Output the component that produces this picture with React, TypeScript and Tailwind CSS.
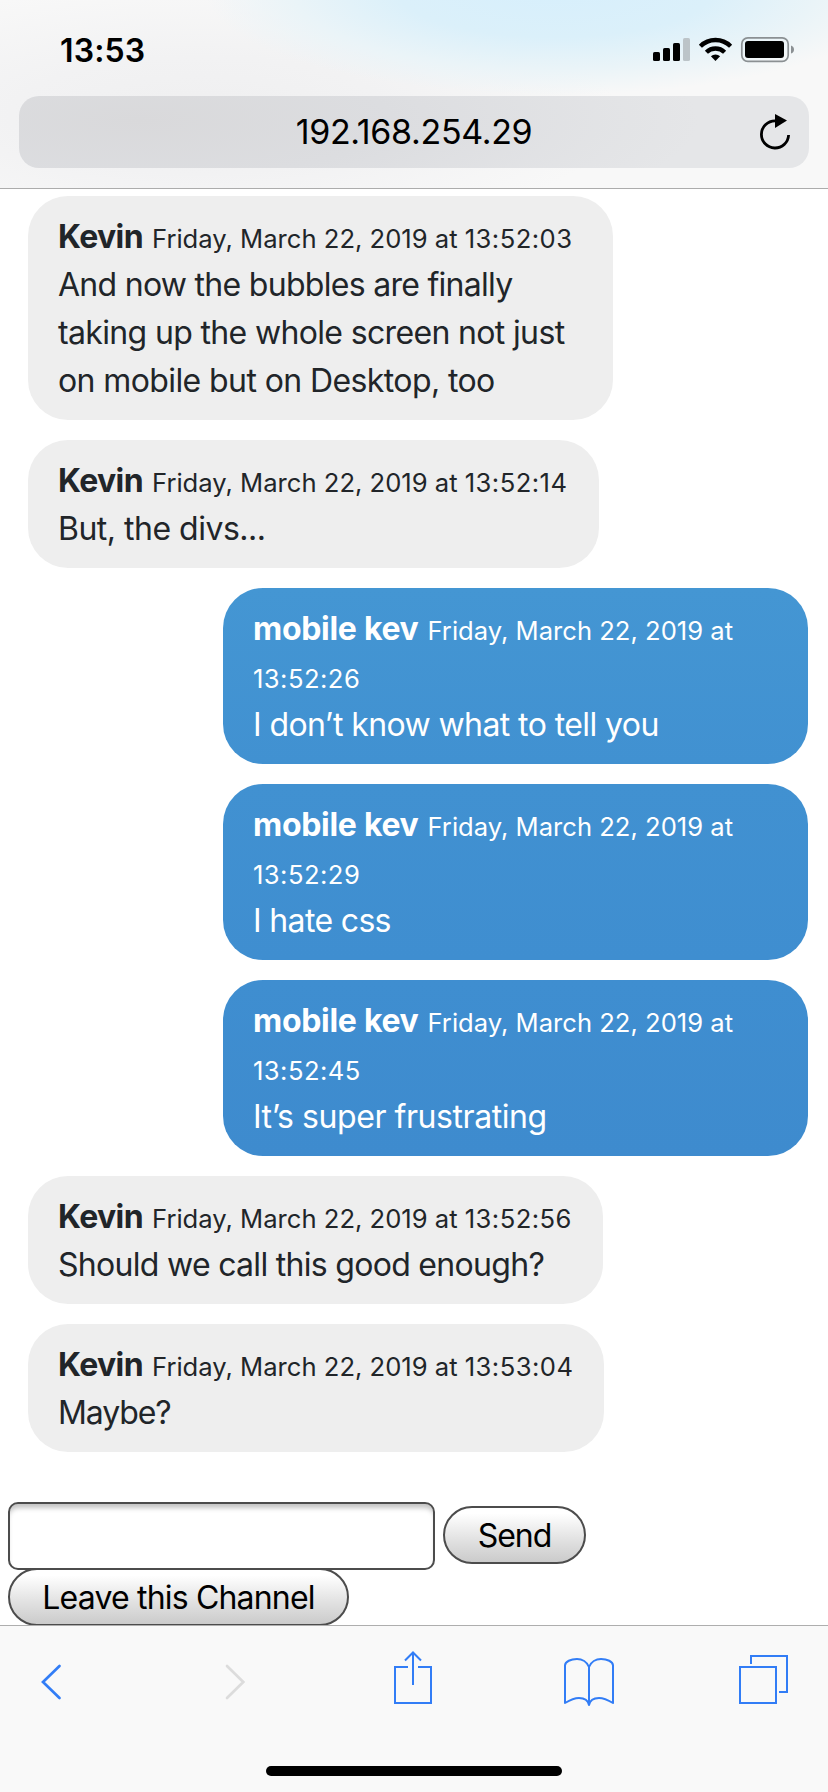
import React from "react";

type Line = { text: string; tracking: string };

type Message = {
  author: string;
  time: string;
  lines: Line[];
  mine?: boolean;
  box: string;
};

const messages: Message[] = [
  {
    author: "Kevin",
    time: "13:52:03",
    lines: [
      { text: "And now the bubbles are finally", tracking: "tracking-[-0.71px]" },
      { text: "taking up the whole screen not just", tracking: "tracking-[-0.65px]" },
      { text: "on mobile but on Desktop, too", tracking: "tracking-[-0.6px]" },
    ],
    box: "w-[585px]",
  },
  { author: "Kevin", time: "13:52:14", lines: [{ text: "But, the divs...", tracking: "tracking-[-0.5px]" }], box: "w-[571px]" },
  {
    author: "mobile kev",
    time: "13:52:26",
    lines: [{ text: "I don’t know what to tell you", tracking: "tracking-[-0.59px]" }],
    mine: true,
    box: "bg-linear-to-b from-[#4496d3] to-[#4191d1]",
  },
  {
    author: "mobile kev",
    time: "13:52:29",
    lines: [{ text: "I hate css", tracking: "tracking-[-0.65px]" }],
    mine: true,
    box: "bg-linear-to-b from-[#4191d1] to-[#3f8ed0]",
  },
  {
    author: "mobile kev",
    time: "13:52:45",
    lines: [{ text: "It’s super frustrating", tracking: "tracking-[-0.44px]" }],
    mine: true,
    box: "bg-linear-to-b from-[#3f8ed0] to-[#3e8bce]",
  },
  {
    author: "Kevin",
    time: "13:52:56",
    lines: [{ text: "Should we call this good enough?", tracking: "tracking-[-0.7px]" }],
    box: "w-[575px]",
  },
  { author: "Kevin", time: "13:53:04", lines: [{ text: "Maybe?", tracking: "tracking-[-1.1px]" }], box: "w-[576px]" },
];

function Bubble({ m }: { m: Message }) {
  const side = m.mine ? "self-end w-[585px] text-white" : "self-start bg-[#eeeeee] text-[#212529]";
  return (
    <article className={`${side} ${m.box} rounded-[40px] pt-[17px] pb-[15px] pl-[30px] whitespace-nowrap text-[32px] leading-[48px]`}>
      <div>
        <strong className={`font-bold ${m.mine ? "tracking-[-0.3px]" : "tracking-[-0.6px]"}`}>{m.author}</strong>{" "}
        <span className="text-[25.6px] leading-none">
          Friday, March 22, 2019 at{m.mine ? <br /> : " "}
          <span className="tracking-[0.45px]">{m.time}</span>
        </span>
      </div>
      {m.lines.map((l) => (
        <div key={l.text} className={l.tracking}>
          {l.text}
        </div>
      ))}
    </article>
  );
}

function StatusIcons() {
  return (
    <svg width="142" height="26" viewBox="653 37 142 26" className="block">
      <rect x="653" y="52" width="7" height="9" rx="1.6" />
      <rect x="663" y="48" width="7" height="13" rx="1.6" />
      <rect x="673" y="43" width="7" height="18" rx="1.6" />
      <rect x="683" y="38" width="7" height="23" rx="1.6" fill="#bcc4c8" />
      <g fill="none" stroke="#000" strokeWidth="4.4">
        <path d="M700.4 46.2a21.5 21.5 0 0 1 30.2 0" />
        <path d="M706.4 52.2a13 13 0 0 1 18.2 0" />
      </g>
      <path d="M715.5 61l-4.600-4.700a6.600 6.600 0 0 1 9.200 0z" />
      <rect x="741.8" y="37.9" width="46.4" height="23.4" rx="6" fill="none" stroke="#8b9093" strokeWidth="1.7" />
      <rect x="745" y="41" width="39" height="17" rx="3" />
      <path d="M791 45.500q3 1 3 4t-3 4z" fill="#8b9093" />
    </svg>
  );
}

function Header() {
  return (
    <header className="h-[189px] shrink-0 border-b border-[#acacac] bg-[#f8f8f8] bg-[radial-gradient(ellipse_350px_105px_at_555px_-10px,#d7effc_0%,#dbf0fa_45%,#eaf4f8_75%,transparent_100%),radial-gradient(ellipse_420px_130px_at_200px_115px,#efeff0_0%,#f2f2f3_45%,transparent_100%)] pl-[19px] pr-[19px]">
      <div className="flex h-24 items-start justify-between pr-[14px] pl-[41px]">
        <span className="pt-8 text-[32px] leading-[38px] font-semibold tracking-[0.15px]">13:53</span>
        <div className="pt-[37px]">
          <StatusIcons />
        </div>
      </div>
      <div className="grid h-[72px] grid-cols-[1fr_auto_1fr] items-center rounded-[20px] bg-[radial-gradient(ellipse_560px_130px_at_120px_24px,#d9d9db_0%,#dcdde0_45%,#e5e6e8_100%)]">
        <span />
        <span className="text-[34px] leading-10 tracking-[-0.33px]">192.168.254.29</span>
        <svg width="32" height="38" viewBox="759 113 32 38" className="mr-[18px] block justify-self-end">
          <path d="M788.6 135a13.6 13.6 0 1 1-13.6-14.200" fill="none" stroke="#000" strokeWidth="2.8" />
          <path d="M775 114l12 6.600-12 7.400z" />
        </svg>
      </div>
    </header>
  );
}

function Toolbar() {
  return (
    <nav className="relative flex h-[167px] shrink-0 flex-col items-center justify-between border-t border-black/30 bg-[#f9f9f9] pb-4">
      <div className="flex h-[85px] w-full items-start pt-[24px] pl-10 text-[#327df6]">
        <svg width="24" height="58" viewBox="40 1650 24 58" fill="none" stroke="currentColor" strokeWidth="2.7" strokeLinecap="round">
          <path d="M59.500 1666l-16.500 16 16.500 16" />
        </svg>
        <svg width="24" height="58" viewBox="224 1650 24 58" fill="none" stroke="#dcdcdc" strokeWidth="2.7" strokeLinecap="round" className="ml-[160px]">
          <path d="M227 1666l16.300 16-16.300 16" />
        </svg>
        <svg width="40" height="58" viewBox="393 1650 40 58" fill="none" stroke="currentColor" strokeWidth="2" className="ml-[145px]">
          <path d="M408 1667H395v36h36v-36h-13M413 1685v-32M405 1660.500l8-8 8 8" />
        </svg>
        <svg width="52" height="58" viewBox="563 1650 52 58" fill="none" stroke="currentColor" strokeWidth="2" strokeLinejoin="round" className="ml-[130px]">
          <path d="M589 1667C587 1662 582 1659 577 1659C571 1659 565 1661.500 565 1665.500V1703C570 1700 574 1698 579 1698C584 1698 588 1700 589 1705C590 1700 594 1698 599 1698C604 1698 608 1700 613 1703V1665.500C613 1661.500 607 1659 601 1659C596 1659 591 1662 589 1667V1705" />
        </svg>
        <svg width="52" height="58" viewBox="738 1650 52 58" fill="none" stroke="currentColor" strokeWidth="2" className="ml-[123px]">
          <path d="M740 1667h36v36h-36zM751 1664v-8h36v36h-8" />
        </svg>
      </div>
      <div className="h-[10px] w-[296px] rounded-full bg-black" />
    </nav>
  );
}

const button =
  "block h-[58px] rounded-full border-2 border-[#4c4c4c] bg-linear-to-b from-white from-10% via-[#e4e4e4] via-55% to-[#cbcbcb] pt-[2px] text-[32px] leading-[52px] text-black whitespace-nowrap";

export default function App() {
  return (
    <div className="flex h-[1792px] w-[828px] flex-col overflow-hidden bg-white font-['Inter','Liberation_Sans',sans-serif] text-black">
      <Header />
      <main className="flex h-[1436px] shrink-0 flex-col pt-[7px]">
        <section className="flex flex-col gap-5 pr-5 pl-7">
          {messages.map((m) => (
            <Bubble key={m.time} m={m} />
          ))}
        </section>
        <form className="mt-[50px] pl-2" onSubmit={(e) => e.preventDefault()}>
          <div className="flex h-[66px] items-start gap-2">
            <input
              aria-label="Message"
              className="h-[68px] w-[427px] rounded-[10px] border-2 border-[#4c4c4c] bg-white shadow-[inset_0_6px_5px_-2px_#c4c4c4] outline-none"
            />
            <button className={`${button} mt-1 w-[143px] tracking-[-1.1px]`}>Send</button>
          </div>
          <button type="button" className={`${button} relative w-[341px] tracking-[-0.82px]`}>
            Leave this Channel
          </button>
        </form>
      </main>
      <Toolbar />
    </div>
  );
}
